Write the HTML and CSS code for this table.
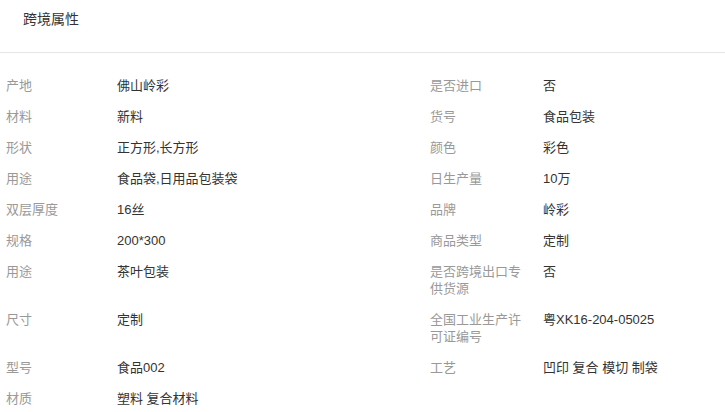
FILE: index.html
```html
<!DOCTYPE html>
<html lang="zh-CN">
<head>
    <meta charset="UTF-8">
    <title>跨境属性</title>
    <link rel="stylesheet" href="styles.css">
</head>
<body>

    <!-- 标题 -->
    <div class="panel-title">跨境属性</div>

    <!-- 属性列表 -->
    <div class="attr-list">
        <div class="attr-row">
            <span class="attr-name">产地</span><span class="attr-value">佛山岭彩</span>
            <span class="attr-name">是否进口</span><span class="attr-value">否</span>
        </div>
        <div class="attr-row">
            <span class="attr-name">材料</span><span class="attr-value">新料</span>
            <span class="attr-name">货号</span><span class="attr-value">食品包装</span>
        </div>
        <div class="attr-row">
            <span class="attr-name">形状</span><span class="attr-value">正方形,长方形</span>
            <span class="attr-name">颜色</span><span class="attr-value">彩色</span>
        </div>
        <div class="attr-row">
            <span class="attr-name">用途</span><span class="attr-value">食品袋,日用品包装袋</span>
            <span class="attr-name">日生产量</span><span class="attr-value">10万</span>
        </div>
        <div class="attr-row">
            <span class="attr-name">双层厚度</span><span class="attr-value">16丝</span>
            <span class="attr-name">品牌</span><span class="attr-value">岭彩</span>
        </div>
        <div class="attr-row">
            <span class="attr-name">规格</span><span class="attr-value">200*300</span>
            <span class="attr-name">商品类型</span><span class="attr-value">定制</span>
        </div>
        <div class="attr-row">
            <span class="attr-name">用途</span><span class="attr-value">茶叶包装</span>
            <span class="attr-name">是否跨境出口专供货源</span><span class="attr-value">否</span>
        </div>
        <div class="attr-row">
            <span class="attr-name">尺寸</span><span class="attr-value">定制</span>
            <span class="attr-name">全国工业生产许可证编号</span><span class="attr-value">粤XK16-204-05025</span>
        </div>
        <div class="attr-row">
            <span class="attr-name">型号</span><span class="attr-value">食品002</span>
            <span class="attr-name">工艺</span><span class="attr-value">凹印 复合 模切 制袋</span>
        </div>
        <div class="attr-row">
            <span class="attr-name">材质</span><span class="attr-value">塑料 复合材料</span>
            <span class="attr-name"></span><span class="attr-value"></span>
        </div>
    </div>

</body>
</html>
```

FILE: styles.css
```css
/* Página */
body {
    margin: 0;
    padding: 0;
    background: #fff;
    font-family: "Liberation Sans", "Noto Sans CJK SC", sans-serif;
    color: #333;
}

/* Título */
.panel-title {
    height: 52px;
    line-height: 38px;
    padding-left: 23px;
    font-size: 14px;
    color: #333;
    border-bottom: 1px solid #e6e6e6;
}

/* Lista de atributos */
.attr-list {
    padding-top: 17px;
}

.attr-row {
    display: grid;
    grid-template-columns: 111px 313px 113px 1fr;
    padding: 7px 0 7px 6px;
    font-size: 13px;
    line-height: 17px;
}

.attr-name {
    color: #999;
    padding-right: 12px;
}

.attr-value {
    color: #333;
}
```
